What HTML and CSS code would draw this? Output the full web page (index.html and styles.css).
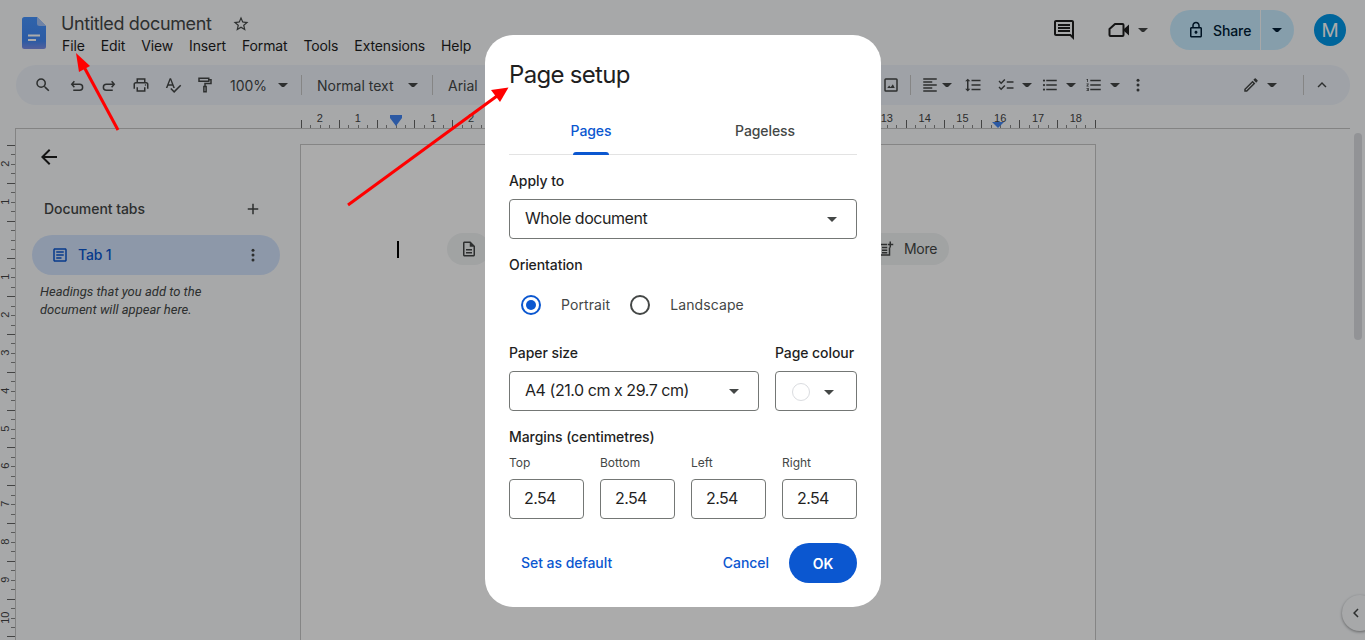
FILE: index.html
```html
<!DOCTYPE html>
<html lang="en">
<head>
<meta charset="utf-8">
<title>Untitled document</title>
<link rel="stylesheet" href="styles.css">
</head>
<body>
<svg class="defs" width="0" height="0" aria-hidden="true">
  <symbol id="i-search" viewBox="0 0 24 24"><path d="M15.5 14h-.79l-.28-.27A6.471 6.471 0 0 0 16 9.5 6.5 6.5 0 1 0 9.5 16c1.61 0 3.09-.59 4.23-1.57l.27.28v.79l5 4.99L20.49 19l-4.99-5zm-6 0C7.01 14 5 11.99 5 9.5S7.01 5 9.5 5 14 7.01 14 9.5 11.99 14 9.5 14z"/></symbol>
  <symbol id="i-undo" viewBox="0 0 24 24"><path fill="none" stroke="currentColor" stroke-width="2" d="M8.5 7 5 11l3.5 4M5 11h10.5a4 4 0 0 1 0 8H7"/></symbol>
  <symbol id="i-redo" viewBox="0 0 24 24"><path fill="none" stroke="currentColor" stroke-width="2" d="M15.500 7 19 11l-3.500 4M19 11H8.500a4 4 0 0 0 0 8H17"/></symbol>
  <symbol id="i-print" viewBox="0 0 24 24"><path d="M19 8h-1V3H6v5H5c-1.66 0-3 1.34-3 3v6h4v4h12v-4h4v-6c0-1.66-1.34-3-3-3zM8 5h8v3H8V5zm8 14H8v-4h8v4zm2-2v-2H6v2H4v-6c0-.55.45-1 1-1h14c.55 0 1 .45 1 1v6h-2z"/><circle cx="18" cy="12" r="1"/></symbol>
  <symbol id="i-spell" viewBox="0 0 24 24"><path d="M12.45 16h2.09L9.43 3H7.57L2.46 16h2.09l1.12-3h5.64l1.14 3zm-6.02-5L8.5 5.48 10.57 11H6.43zm15.16.59-8.09 8.09L9.83 16l-1.41 1.41 5.09 5.09L23 13l-1.41-1.41z"/></symbol>
  <symbol id="i-paint" viewBox="0 0 24 24"><path fill="none" stroke="currentColor" stroke-width="2" d="M4 3h13v4H4zM17 5h3v5h-8v4M10.500 14h3v7h-3z"/></symbol>
  <symbol id="i-image" viewBox="0 0 24 24"><path d="M19 3H5a2 2 0 0 0-2 2v14a2 2 0 0 0 2 2h14a2 2 0 0 0 2-2V5a2 2 0 0 0-2-2zm0 16H5V5h14v14zM14.500 11l-3 4-2-2.500L7 16h10z"/></symbol>
  <symbol id="i-align" viewBox="0 0 24 24"><path d="M3 3h18v2H3zM3 7h12v2H3zM3 11h18v2H3zM3 15h12v2H3zM3 19h18v2H3z"/></symbol>
  <symbol id="i-lines" viewBox="0 0 24 24"><path d="M6 7h2.500L5 3.500 1.500 7H4v10H1.500L5 20.500 8.500 17H6V7zm4-2v2h12V5H10zm0 14h12v-2H10v2zm0-6h12v-2H10v2z"/></symbol>
  <symbol id="i-check" viewBox="0 0 24 24"><path d="M22 7h-9v2h9V7zm0 8h-9v2h9v-2zM5.540 11 2 7.460l1.410-1.410 2.120 2.120 4.240-4.240 1.410 1.410L5.540 11zm0 8L2 15.460l1.410-1.410 2.120 2.120 4.240-4.240 1.410 1.410L5.540 19z"/></symbol>
  <symbol id="i-bullet" viewBox="0 0 24 24"><path d="M4 10.500a1.500 1.500 0 1 0 0 3 1.500 1.500 0 0 0 0-3zm0-6a1.500 1.500 0 1 0 0 3 1.500 1.500 0 0 0 0-3zm0 12a1.500 1.500 0 1 0 0 3 1.500 1.500 0 0 0 0-3zM7 19h14v-2H7v2zm0-6h14v-2H7v2zm0-8v2h14V5H7z"/></symbol>
  <symbol id="i-number" viewBox="0 0 24 24"><path d="M2 17h2v.5H3v1h1v.5H2v1h3v-4H2v1zm1-9h1V4H2v1h1v3zm-1 3h1.800L2 13.100v.9h3v-1H3.200L5 10.900V10H2v1zm5-6v2h14V5H7zm0 14h14v-2H7v2zm0-6h14v-2H7v2z"/></symbol>
  <symbol id="i-more" viewBox="0 0 24 24"><circle cx="12" cy="5.500" r="2"/><circle cx="12" cy="12" r="2"/><circle cx="12" cy="18.500" r="2"/></symbol>
  <symbol id="i-pencil" viewBox="0 0 24 24"><path d="m14.060 9.020.92.92L5.920 19H5v-.92l9.060-9.060M17.660 3c-.25 0-.51.1-.7.29l-1.830 1.830 3.750 3.750 1.830-1.830c.39-.39.39-1.020 0-1.410l-2.340-2.340c-.2-.2-.45-.29-.71-.29zm-3.600 3.190L3 17.250V21h3.750L17.810 9.940l-3.750-3.750z"/></symbol>
  <symbol id="i-up" viewBox="0 0 24 24"><path d="M12 8l-6 6 1.410 1.410L12 10.830l4.590 4.580L18 14z"/></symbol>
  <symbol id="i-star" viewBox="0 0 24 24"><path d="m22 9.240-7.190-.62L12 2 9.190 8.630 2 9.240l5.460 4.730L5.820 21 12 17.270 18.180 21l-1.630-7.030L22 9.240zM12 15.400l-3.760 2.270 1-4.280-3.320-2.880 4.380-.38L12 6.100l1.710 4.040 4.380.38-3.320 2.880 1 4.280L12 15.400z"/></symbol>
  <symbol id="i-comment" viewBox="0 0 24 24"><path d="M20 2H4c-1.100 0-2 .9-2 2v12c0 1.100.9 2 2 2h14l4 4V4c0-1.100-.9-2-2-2zm0 15.170L18.830 16H4V4h16v13.170zM6 12h12v2H6zm0-3h12v2H6zm0-3h12v2H6z"/></symbol>
  <symbol id="i-video" viewBox="0 0 24 24"><path fill="none" stroke="currentColor" stroke-width="2" stroke-linejoin="round" d="M8 6h7.500a1 1 0 0 1 1 1v10a1 1 0 0 1-1 1H3.500a1 1 0 0 1-1-1v-6z"/><path d="m17 11 5-4.500v11L17 13z"/></symbol>
  <symbol id="i-lock" viewBox="0 0 24 24"><path d="M18 8h-1V6c0-2.760-2.240-5-5-5S7 3.240 7 6v2H6c-1.100 0-2 .9-2 2v10c0 1.100.9 2 2 2h12c1.100 0 2-.9 2-2V10c0-1.100-.9-2-2-2zM9 6c0-1.660 1.340-3 3-3s3 1.340 3 3v2H9V6zm9 14H6V10h12v10zm-6-3c1.100 0 2-.9 2-2s-.9-2-2-2-2 .9-2 2 .9 2 2 2z"/></symbol>
  <symbol id="i-back" viewBox="0 0 24 24"><path d="M20 11H7.830l5.590-5.590L12 4l-8 8 8 8 1.410-1.410L7.830 13H20v-2z"/></symbol>
  <symbol id="i-plus" viewBox="0 0 24 24"><path d="M19 13h-6v6h-2v-6H5v-2h6V5h2v6h6v2z"/></symbol>
  <symbol id="i-article" viewBox="0 0 24 24"><path d="M19 5v14H5V5h14m0-2H5c-1.100 0-2 .9-2 2v14c0 1.100.9 2 2 2h14c1.100 0 2-.9 2-2V5c0-1.100-.9-2-2-2zM14 17H7v-2h7v2zm3-4H7v-2h10v2zm0-4H7V7h10v2z"/></symbol>
  <symbol id="i-doc" viewBox="0 0 24 24"><path d="M8 16h8v2H8zm0-4h8v2H8zm6-10H6c-1.100 0-2 .9-2 2v16c0 1.100.89 2 1.990 2H18c1.100 0 2-.9 2-2V8l-6-6zm4 18H6V4h7v5h5v11z"/></symbol>
  <symbol id="i-noteadd" viewBox="0 0 24 24"><path d="M16 5H4v16h15V10h-2v9H6V7h10zM8 9h7v2H8zm0 3.500h7v2H8zM8 16h7v2H8zM18 2h2v3h3v2h-3v3h-2V7h-3V5h3z"/></symbol>
</svg>

<div class="app">
  <header class="topbar">
    <svg class="logo" viewBox="0 0 24 32" aria-hidden="true">
      <defs><linearGradient id="logo-fill" x1="0" y1="0" x2="0" y2="1"><stop offset="0" stop-color="#4694ff"/><stop offset=".75" stop-color="#4388f5"/><stop offset="1" stop-color="#7d8fe8"/></linearGradient></defs>
      <path fill="url(#logo-fill)" d="M2.500 0H15l9 9v20.500a2.500 2.500 0 0 1-2.500 2.500h-19A2.500 2.500 0 0 1 0 29.500v-27A2.500 2.500 0 0 1 2.500 0z"/>
      <path fill="#a6c4f8" d="M15 0l9 9h-6.500A2.500 2.500 0 0 1 15 6.500z"/>
      <path fill="#fff" d="M6 17.500h12v2H6zM6 22h8v2H6z"/>
    </svg>
    <div class="titleblock">
      <div class="titlerow">
        <span class="doctitle">Untitled document</span>
        <svg class="icon star"><use href="#i-star"/></svg>
      </div>
      <nav class="menubar">
        <span>File</span><span>Edit</span><span>View</span><span>Insert</span><span>Format</span><span>Tools</span><span>Extensions</span><span>Help</span>
      </nav>
    </div>
    <div class="actions">
      <svg class="icon act-comment"><use href="#i-comment"/></svg>
      <svg class="icon act-video"><use href="#i-video"/></svg>
      <span class="caret act-caret"></span>
      <div class="share">
        <div class="share-main"><svg class="icon lock"><use href="#i-lock"/></svg><span>Share</span></div>
        <div class="share-drop"><span class="caret"></span></div>
      </div>
      <div class="avatar">M</div>
    </div>
  </header>

  <div class="toolbar">
    <span class="tb tb32"><svg class="icon"><use href="#i-search"/></svg></span>
    <span class="tb tb32 ml2"><svg class="icon"><use href="#i-undo"/></svg></span>
    <span class="tb tb32"><svg class="icon"><use href="#i-redo"/></svg></span>
    <span class="tb tb32"><svg class="icon"><use href="#i-print"/></svg></span>
    <span class="tb tb32"><svg class="icon"><use href="#i-spell"/></svg></span>
    <span class="tb tb32"><svg class="icon"><use href="#i-paint"/></svg></span>
    <span class="tbtext zoomval">100%</span>
    <span class="caret caret-zoom"></span>
    <span class="sep sep-a"></span>
    <span class="tbtext styleval">Normal text</span>
    <span class="caret caret-style"></span>
    <span class="sep sep-b"></span>
    <span class="tbtext fontval">Arial</span>

    <span class="tb tb24 push"><svg class="icon"><use href="#i-image"/></svg></span>
    <span class="sep ml7"></span>
    <span class="tb tb24 ml7"><svg class="icon"><use href="#i-align"/></svg></span>
    <span class="caret"></span>
    <span class="tb tb24 ml9"><svg class="icon"><use href="#i-lines"/></svg></span>
    <span class="tb tb24 ml9"><svg class="icon"><use href="#i-check"/></svg></span>
    <span class="caret ml4"></span>
    <span class="tb tb24 ml6"><svg class="icon"><use href="#i-bullet"/></svg></span>
    <span class="caret ml4"></span>
    <span class="tb tb24 ml6"><svg class="icon"><use href="#i-number"/></svg></span>
    <span class="caret ml4"></span>
    <span class="tb tb24 ml6"><svg class="icon"><use href="#i-more"/></svg></span>
    <span class="tb tb24 ml89"><svg class="icon"><use href="#i-pencil"/></svg></span>
    <span class="caret ml4"></span>
    <span class="sep ml26"></span>
    <span class="tb tb24 ml6"><svg class="icon"><use href="#i-up"/></svg></span>
  </div>

  <div class="hruler">
    <div class="hscale">
      <span>2</span><span>1</span><span></span><span>1</span><span>2</span><span>3</span><span>4</span><span>5</span><span>6</span><span>7</span><span>8</span><span>9</span><span>10</span><span>11</span><span>12</span><span>13</span><span>14</span><span>15</span><span>16</span><span>17</span><span>18</span>
      <i class="marker-left"></i>
      <i class="marker-right"></i>
    </div>
  </div>

  <div class="workspace">
    <div class="vruler">
      <div class="vscale">
        <span>2</span><span>1</span><span></span><span>1</span><span>2</span><span>3</span><span>4</span><span>5</span><span>6</span><span>7</span><span>8</span><span>9</span><span>10</span>
      </div>
    </div>
    <aside class="sidebar">
      <svg class="icon back"><use href="#i-back"/></svg>
      <div class="tabs-head"><span>Document tabs</span><svg class="icon plus"><use href="#i-plus"/></svg></div>
      <div class="tab-pill">
        <svg class="icon tab-icon"><use href="#i-article"/></svg>
        <span class="tab-name">Tab 1</span>
        <svg class="icon tab-more"><use href="#i-more"/></svg>
      </div>
      <p class="hint">Headings that you add to the document will appear here.</p>
    </aside>
    <main class="page">
      <div class="page-line">
        <span class="cursor"></span>
        <div class="chips">
          <span class="chip chip-doc"><svg class="icon"><use href="#i-doc"/></svg></span>
          <span class="chip chip-more"><svg class="icon"><use href="#i-noteadd"/></svg><span class="chip-text">More</span></span>
        </div>
      </div>
    </main>
  </div>
</div>

<div class="scrollthumb"></div>
<div class="sidetoggle"><svg class="toggle-chev" viewBox="0 0 24 24"><path d="M15.410 7.410 14 6l-6 6 6 6 1.410-1.410L10.830 12z"/></svg></div>
<div class="scrim"></div>

<section class="dialog" role="dialog" aria-label="Page setup">
  <h1 class="dlg-title">Page setup</h1>
  <div class="dlg-tabs">
    <span class="dlg-tab active">Pages</span>
    <span class="dlg-tab">Pageless</span>
  </div>
  <div class="field-label mt16">Apply to</div>
  <div class="select mt8"><span>Whole document</span><span class="caret-dlg"></span></div>
  <div class="field-label mt16">Orientation</div>
  <div class="radios">
    <span class="radio on"></span><span class="radio-text">Portrait</span>
    <span class="radio"></span><span class="radio-text">Landscape</span>
  </div>
  <div class="paper-row">
    <div class="paper-col">
      <div class="field-label">Paper size</div>
      <div class="select mt8"><span>A4 (21.0 cm x 29.7 cm)</span><span class="caret-dlg"></span></div>
    </div>
    <div class="colour-col">
      <div class="field-label">Page colour</div>
      <div class="select colour mt8"><span class="swatch"></span><span class="caret-dlg"></span></div>
    </div>
  </div>
  <div class="field-label mt16">Margins (centimetres)</div>
  <div class="margins">
    <div class="margin"><div class="margin-label">Top</div><div class="margin-input">2.54</div></div>
    <div class="margin"><div class="margin-label">Bottom</div><div class="margin-input">2.54</div></div>
    <div class="margin"><div class="margin-label">Left</div><div class="margin-input">2.54</div></div>
    <div class="margin"><div class="margin-label">Right</div><div class="margin-input">2.54</div></div>
  </div>
  <div class="dlg-foot">
    <span class="linkbtn default">Set as default</span>
    <span class="linkbtn cancel">Cancel</span>
    <span class="okbtn">OK</span>
  </div>
</section>

<svg class="arrows" viewBox="0 0 1365 640" aria-hidden="true">
  <path d="M118 130 83 65" stroke="#f00" stroke-width="3" fill="none"/>
  <path d="M76 53 90 66 79 72z" fill="#f00"/>
  <path d="M348 205 497 96" stroke="#f00" stroke-width="3" fill="none"/>
  <path d="M508.500 87.500 500 102 491 90z" fill="#f00"/>
</svg>
</body>
</html>
```

FILE: styles.css
```css
* { box-sizing: border-box; }
html, body { margin: 0; height: 640px; overflow: hidden; }
body {
  position: relative;
  background: #f9fbfd;
  color: #444746;
  font-family: Inter, "Noto Sans", Roboto, sans-serif;
  font-size: 14px;
}
.defs { position: absolute; }
.icon { width: 18px; height: 18px; fill: currentColor; display: block; flex: none; }

.app { display: flex; flex-direction: column; height: 640px; }

/* top bar */
.topbar { display: flex; height: 65px; padding-left: 22px; flex: none; }
.logo { width: 24px; height: 32px; margin-top: 17px; flex: none; }
.titleblock { margin-left: 15px; }
.titlerow { display: flex; align-items: center; height: 24px; margin-top: 12px; }
.doctitle { font-size: 18px; line-height: 24px; letter-spacing: -.36px; color: #444746; }
.star { color: #444746; margin-left: 20px; }
.menubar { display: flex; gap: 16px; margin-top: -1px; padding-left: 1px; height: 22px; line-height: 22px; color: #1f1f1f; letter-spacing: -.13px; }

.actions { margin-left: auto; display: flex; align-items: center; padding-right: 19px; height: 60px; color: #1f1f1f; }
.act-comment { width: 24px; height: 24px; }
.act-video { width: 24px; height: 24px; margin-left: 31px; }
.act-caret { margin-left: 7px; }
.share { display: flex; height: 40px; margin-left: 22px; color: #001d35; gap: 1px; }
.share-main { width: 90px; background: #c8ecff; border-radius: 20px 0 0 20px; display: flex; align-items: center; padding-left: 17px; font-weight: 450; letter-spacing: -.1px; }
.lock { width: 18px; height: 18px; margin-right: 8px; }
.share-drop { width: 33px; background: #c8ecff; border-radius: 0 20px 20px 0; display: flex; align-items: center; padding-left: 11px; }
.share-drop .caret::before { border-top-color: #001d35; }
.avatar { width: 32px; height: 32px; margin-left: 20px; border-radius: 50%; background: #0097e8; color: #fff; font-size: 19px; display: flex; align-items: center; justify-content: center; }

.caret { width: 10px; height: 5px; flex: none; display: flex; justify-content: center; }
.caret::before { content: ""; border: 4px solid transparent; border-top-color: #444746; border-bottom: 0; height: 4px; width: 8px; }

/* toolbar */
.toolbar { display: flex; align-items: center; height: 40px; margin: 0 15px 0 16px; padding: 0 16px 0 11px; background: #edf2fa; border-radius: 20px; flex: none; color: #444746; }
.tb { display: flex; align-items: center; justify-content: center; height: 32px; flex: none; }
.tb32 { width: 32px; }
.tb24 { width: 24px; }
.tbtext { color: #444746; letter-spacing: -.02px; white-space: nowrap; }
.zoomval { margin-left: 9px; width: 37px; }
.caret-zoom { margin-left: 11px; }
.sep { width: 1px; height: 20px; background: #c7c7c7; flex: none; display: block; }
.sep-a { margin-left: 13px; }
.styleval { margin-left: 15px; width: 77px; }
.caret-style { margin-left: 14px; }
.sep-b { margin-left: 14px; }
.fontval { margin-left: 15px; }
.push { margin-left: auto; }
.ml2 { margin-left: 2px; }
.ml4 { margin-left: 4px; }
.ml6 { margin-left: 6px; }
.ml7 { margin-left: 7px; }
.ml9 { margin-left: 9px; }
.ml26 { margin-left: 26px; }
.ml89 { margin-left: 89px; }

/* rulers */
.hruler { height: 24px; margin: 0 15px; padding-left: 286px; border-bottom: 1px solid #c4c4c4; flex: none; }
.hscale {
  position: relative;
  display: flex;
  width: 795px;
  height: 23px;
  background:
    repeating-linear-gradient(90deg, #666 0 1px, transparent 1px 37.8px) left bottom / 100% 8px no-repeat,
    repeating-linear-gradient(90deg, #888 0 1px, transparent 1px 9.45px) left bottom / 100% 3px no-repeat;
}
.hscale span { width: 37.8px; flex: none; text-align: center; font: 11px/26px "Liberation Sans", Arial, sans-serif; color: #444; }
.marker-left { position: absolute; left: 89px; top: 10px; width: 12px; height: 3px; background: #4285f4; }
.marker-left::after { content: ""; position: absolute; left: 0; top: 3px; border: 6px solid transparent; border-top: 8px solid #4285f4; border-bottom: 0; }
.marker-right { position: absolute; left: 691px; top: 17px; border: 6px solid transparent; border-top: 6px solid #4285f4; border-bottom: 0; }

.workspace { display: flex; flex: 1; min-height: 0; overflow: hidden; }
.vruler { width: 16px; padding-top: 16px; border-right: 1px solid #c4c4c4; flex: none; }
.vscale {
  height: 500px;
  width: 15px;
  background:
    repeating-linear-gradient(180deg, #666 0 1px, transparent 1px 37.8px) right top / 8px 100% no-repeat,
    repeating-linear-gradient(180deg, #888 0 1px, transparent 1px 9.45px) right top / 4px 100% no-repeat;
}
.vscale span { display: flex; align-items: center; justify-content: center; height: 37.8px; width: 10px; font: 11px/10px "Liberation Sans", Arial, sans-serif; color: #444; writing-mode: vertical-rl; transform: rotate(180deg); }

.sidebar { width: 284px; flex: none; }
.back { width: 24px; height: 24px; margin: 16px 0 0 21px; color: #1f1f1f; }
.tabs-head { display: flex; align-items: center; justify-content: space-between; height: 24px; margin-top: 28px; padding: 0 38px 2px 28px; font-weight: 450; letter-spacing: -.05px; color: #444746; }
.plus { color: #444746; position: relative; top: 1px; }
.tab-pill { display: flex; align-items: center; width: 248px; height: 40px; margin: 14px 0 0 16px; padding: 0 18px 0 19px; background: #d3e3fd; border-radius: 20px; color: #0b57d0; }
.tab-icon { width: 18px; height: 18px; }
.tab-name { margin-left: 9px; flex: 1; letter-spacing: -.2px; padding-bottom: 2px; font-weight: 450; }
.tab-more { color: #444746; }
.hint { margin: 8px 0 0 24px; width: 200px; font: italic 13px/17.500px Roboto, sans-serif; letter-spacing: 0; color: #444746; }

.page { width: 796px; height: 600px; margin-top: 15px; flex: none; background: #fff; border: 1px solid #c7c7c7; padding: 88px 0 0 96px; }
.page-line { display: flex; align-items: center; }
.cursor { width: 2px; height: 17px; background: #000; flex: none; }
.chips { display: flex; justify-content: space-between; width: 502px; margin-left: 48px; }
.chip { display: flex; align-items: center; height: 32px; border-radius: 16px; background: #f1f3f4; padding: 0 12px; color: #444746; }
.chip-doc .icon { margin-left: 1px; }
.chip-more { gap: 10px; padding-left: 12px; }
.chip-text { padding-bottom: 2px; letter-spacing: -.3px; }

/* floating bits */
.scrollthumb { position: absolute; left: 1354px; top: 133px; width: 8px; height: 207px; border-radius: 4px; background: #dadce0; }
.sidetoggle { position: absolute; left: 1342px; top: 595px; width: 36px; height: 36px; border-radius: 50%; background: #f9fbfd; box-shadow: 0 1px 3px rgba(0,0,0,.4); }
.toggle-chev { position: absolute; left: 5px; top: 9px; width: 18px; height: 18px; fill: #444746; }
.scrim { position: absolute; inset: 0; background: rgba(0,0,0,.33); }

/* dialog */
.dialog { position: absolute; left: 485px; top: 35px; width: 396px; height: 572px; padding: 24px 24px 0; background: #fff; border-radius: 28px; color: #1f1f1f; }
.dlg-title { margin: 0; font-size: 24px; font-weight: 400; line-height: 32px; letter-spacing: -.7px; }
.dlg-tabs { display: flex; height: 47px; margin-top: 17px; border-bottom: 1px solid #e3e3e3; }
.dlg-tab { position: relative; width: 174px; margin-left: -5px; margin-right: 5px; text-align: center; font-weight: 450; line-height: 46px; letter-spacing: -.1px; color: #444746; }
.dlg-tab.active { color: #0b57d0; }
.dlg-tab.active::after { content: ""; position: absolute; left: 69px; bottom: -1px; width: 36px; height: 3px; border-radius: 3px 3px 0 0; background: #0b57d0; }
.field-label { font-weight: 450; line-height: 20px; letter-spacing: -.08px; white-space: nowrap; }
.mt8 { margin-top: 8px; }
.mt16 { margin-top: 16px; }
.select { display: flex; align-items: center; justify-content: space-between; height: 40px; padding: 0 19px 2px 15px; border: 1px solid #747775; border-radius: 4px; font-size: 16px; letter-spacing: -.45px; }
.caret-dlg { flex: none; width: 10px; height: 5px; border: 5px solid transparent; border-top-color: #444746; border-bottom: 0; margin-top: 2px; }
.radios { display: flex; align-items: center; height: 40px; margin-top: 10px; padding-left: 12px; }
.radio { width: 20px; height: 20px; border-radius: 50%; border: 2px solid #444746; flex: none; display: flex; align-items: center; justify-content: center; }
.radio.on { border-color: #0b57d0; }
.radio.on::after { content: ""; width: 10px; height: 10px; border-radius: 50%; background: #0b57d0; }
.radio-text { margin: 0 20px; color: #444746; letter-spacing: .1px; padding-bottom: 1px; }
.paper-row { display: flex; gap: 16px; margin-top: 18px; }
.paper-col { width: 250px; }
.colour-col { width: 82px; }
.colour { padding: 0 22px 0 16px; }
.swatch { width: 18px; height: 18px; border-radius: 50%; border: 1px solid #dadce0; background: #fff; margin-top: 2px; }
.margins { display: flex; gap: 16px; margin-top: 8px; }
.margin { width: 75px; }
.margin-label { font-size: 12px; line-height: 16px; color: #444746; letter-spacing: 0; }
.margin-input { height: 40px; margin-top: 8px; padding-left: 14px; border: 1px solid #747775; border-radius: 4px; font-size: 16px; line-height: 36px; letter-spacing: -.6px; }
.dlg-foot { display: flex; align-items: center; height: 40px; margin-top: 24px; }
.linkbtn { color: #0b57d0; font-weight: 450; letter-spacing: -.05px; padding-bottom: 2px; }
.default { margin-left: 12px; }
.cancel { margin-left: auto; }
.okbtn { display: flex; align-items: center; justify-content: center; width: 68px; height: 40px; margin-left: 20px; border-radius: 20px; background: #0b57d0; color: #fff; font-weight: 600; }
.arrows { position: absolute; left: 0; top: 0; width: 1365px; height: 640px; pointer-events: none; }
```
